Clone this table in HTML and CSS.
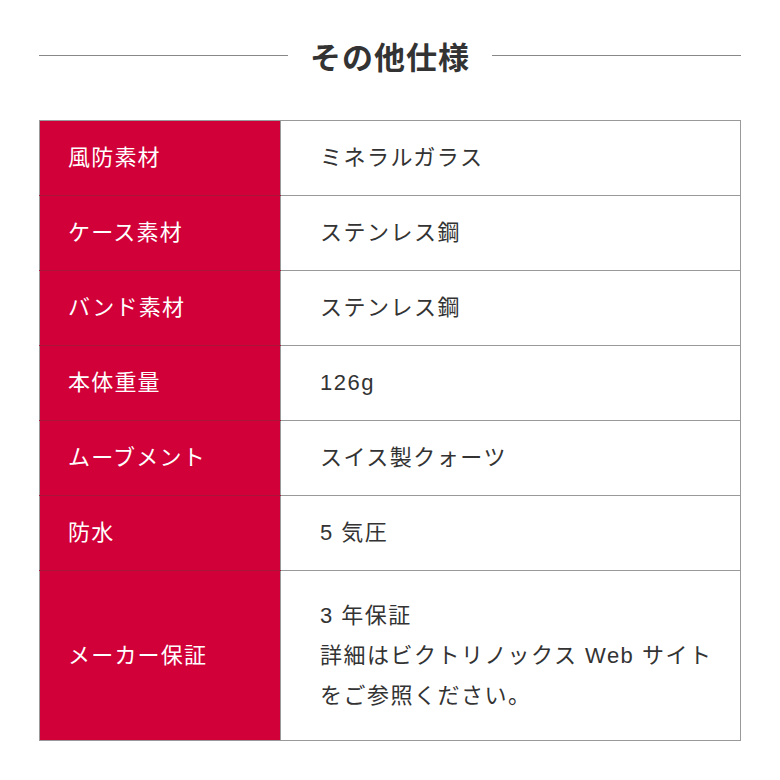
FILE: index.html
```html
<!DOCTYPE html>
<html lang="ja">
<head>
<meta charset="utf-8">
<link rel="stylesheet" href="styles.css">
</head>
<body>
<div class="page">
  <h2 class="heading"><span class="line"></span><span class="title">その他仕様</span><span class="line"></span></h2>
  <table class="spec">
    <tr><th>風防素材</th><td>ミネラルガラス</td></tr>
    <tr><th>ケース素材</th><td>ステンレス鋼</td></tr>
    <tr><th>バンド素材</th><td>ステンレス鋼</td></tr>
    <tr><th>本体重量</th><td>126g</td></tr>
    <tr><th>ムーブメント</th><td>スイス製クォーツ</td></tr>
    <tr><th>防水</th><td>5 気圧</td></tr>
    <tr class="tall"><th>メーカー保証</th><td>3 年保証<br>詳細はビクトリノックス Web サイト<br>をご参照ください。</td></tr>
  </table>
</div>
</body>
</html>
```

FILE: styles.css
```css
html, body {
  margin: 0;
  padding: 0;
  background: #fff;
}
body {
  font-family: "Liberation Sans", "Noto Sans CJK JP", sans-serif;
  color: #333;
}
.page {
  padding: 0 39px 0 39px;
}
.heading {
  margin: 0 0 10px 0;
  height: 110px;
  display: flex;
  align-items: center;
  gap: 22px;
}
.heading .line {
  flex: 1;
  height: 1px;
  background: #888;
}
.heading .title {
  font-family: "Noto Sans CJK JP", sans-serif;
  font-size: 31px;
  font-weight: 700;
  color: #333;
  letter-spacing: 1px;
  line-height: 1;
}
.spec {
  width: 702px;
  border-collapse: collapse;
  border: 1px solid #999;
  font-size: 22px;
  line-height: 40px;
}
.spec th {
  width: 241px;
  background: #d10038;
  color: #fff;
  font-weight: 400;
  text-align: left;
  padding: 0 0 0 28px;
  height: 74px;
  border-bottom: 1px solid #a8143a;
  box-sizing: border-box;
  letter-spacing: 1.2px;
}
.spec td {
  padding: 0 0 0 39px;
  border-bottom: 1px solid #999;
  border-left: 1px solid #999;
  height: 74px;
  letter-spacing: 1.5px;
}
.spec tr.tall th,
.spec tr.tall td {
  height: 169px;
}
.spec tr:last-child th,
.spec tr:last-child td {
  border-bottom: 1px solid #999;
}
```
